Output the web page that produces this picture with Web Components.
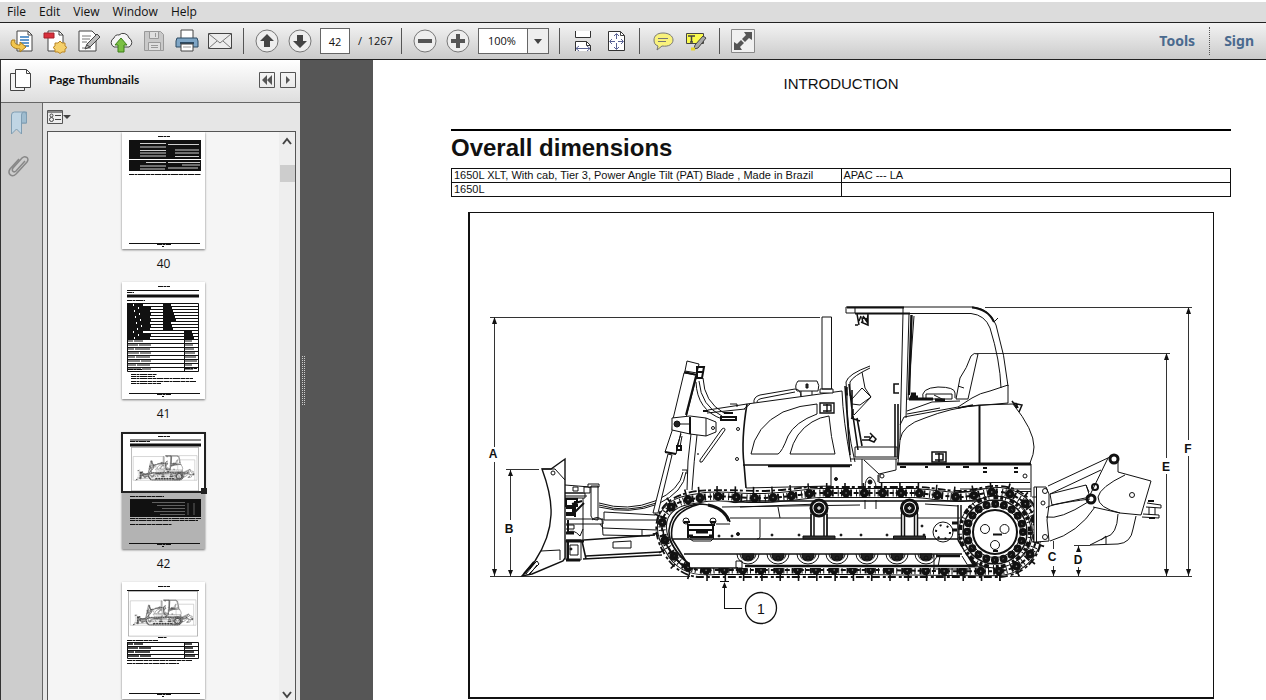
<!DOCTYPE html>
<html lang="en">
<head>
<meta charset="utf-8">
<title>Service manual - page 42</title>
<style>
html,body{margin:0;height:100%;overflow:hidden}
body{font:12px/16px "Open Sans","Noto Sans",sans-serif;color:#111;background:#fff}
</style>
</head>
<body>
<viewer-app></viewer-app>
<script>
const define = (name, html, setup) => {
  const tpl = document.createElement('template');
  tpl.innerHTML = html;
  customElements.define(name, class extends HTMLElement {
    constructor() {
      super();
      this.attachShadow({ mode: 'open' }).append(tpl.content.cloneNode(true));
    }
    connectedCallback() { if (setup) setup(this, this.shadowRoot); }
  });
};

/* Side view of the dozer, in the coordinate space 470..1212 x 213..696 */
const TRACK = 'M700 498C720 494 740 499 765 498C790 497 800 494 820 493H915C930 494 940 496 960 497C975 497 985 491 1000 492C1022 494 1037 512 1037 532C1037 552 1022 569 1000 571C960 572 900 570 860 570H715C692 572 678 566 670 550C662 538 660 526 664 516C670 504 682 500 700 498Z';
const FEET = 'M698 491C720 489 740 491 765 491C790 490 800 487 820 487H915C930 487 940 490 960 491C975 491 985 485 1000 486C1025 487 1042 508 1042 532C1042 556 1026 575 1000 577H700C686 577 672 568 664 553C656 540 654 526 659 514C665 500 680 493 698 491Z';
const rollers = [748, 778, 808, 837, 867, 897, 926].map(x =>
  `<path d="M${x - 11} 554A11 10 0 0 0 ${x + 11} 554"/><path d="M${x - 8} 554A8 7 0 0 0 ${x + 8} 554"/><path d="M${x - 6} 554h12v3l-3 3h-6l-3-3z" fill="#222"/><circle cx="${x}" cy="558" r="2"/>`).join('');
const carrier = x =>
  `<path fill="#fff" d="M${x - 8} 511h16v26h-16z"/><path stroke-width="1.500" d="M${x - 5} 514v22M${x + 5} 514v22M${x - 8} 514v22M${x + 8} 514v22"/><path fill="#333" d="M${x - 16} 536h32v3h-32z"/><circle cx="${x}" cy="508" r="8" fill="#fff" stroke-width="3"/><circle cx="${x}" cy="508" r="3.500" stroke-width="4"/><path stroke="#bbb" stroke-width="1" d="M${x - 2} 508h4M${x} 506v4"/>`;
const DOZER = `
<g fill="none" stroke="#111" stroke-width="1">
  <g id="blade">
    <path stroke-width="1.4" d="M542 469Q552 496 551 515Q550 538 535 561L522 576L532 574L563 561L565 558V459L551 469Z"/>
    <path d="M542 469H555L565 480M541 551L560 550V560M522 576L537 561L539 564L528 575M526 574L535 563M530 574L537 565"/>
    <circle cx="553" cy="473" r="2"/>
    <path stroke-width="2" d="M534 562L524 574"/>
    <path d="M565 485L590 487V493H565M573 487h5v4h-5zM565 496h22M584 492v-5h7M565 493h20v5h-20"/>
    <path fill="#fff" d="M591 486V516Q592 520 598 520V486zM588 484h11v3h-11z"/>
    <path stroke-width="2" d="M566 499h11v7h-11zM566 508h7v5h-7M572 504l10-3M575 512l9-9M566 515h10M575 501v16"/>
    <path d="M566 519H603V524H566M583 498V540M567 533Q573 528 580 536L583 529M566 525h8v4h-8M592 520Q597 515 602 520"/>
    <path d="M604 512L655 515M604 520H657M603 528L657 530M604 512V520M602 519L603 535L650 536M642 530V536M600 524L603 528"/>
    <path stroke-width="1.6" d="M584 540L655 535M583 559L662 555M586 556L660 552M582 541L586 559"/>
    <path d="M613 542L631 541V548H613zM566 540h15v20h-15zM570 545h8v10h-8z"/>
    <path stroke-width="3" d="M566 541H584M566 560H580M566 533h8"/>
    <path stroke-width="2" d="M568 520v14M568 540v20"/>
    <circle cx="571" cy="549" r="1" fill="#111"/>
    <path d="M599 503Q628 512 655 501Q680 490 683 472M599 507Q630 515 658 504Q684 492 686 472M599 505Q628 514 656 503"/>
  </g>
  <g id="cylinder">
    <path fill="#fff" d="M668 454L653 513L658 513L672 455z"/>
    <path d="M687 490Q687 460 691 434M692 490Q694 460 697 435M682 470h5v4"/>
    <path fill="#fff" d="M687 361L699 364L697 373L685 371ZM684 373L673 419L672 431L665 452L676 454L681 432L686 418L697 375Z"/>
    <path stroke-width="2" d="M684 372L697 375M665 452L676 454M696 376L686 415"/>
    <path fill="#fff" d="M672 418L690 416L706 418L716 422V432L706 436L690 434L672 430Z"/>
    <path stroke-width="2" d="M690 417V434"/>
    <path d="M706 418V436M679 424H690"/>
    <circle cx="677" cy="424" r="3" fill="#222"/><circle cx="713" cy="428" r="1.5"/>
    <path stroke-width="2" d="M697 367L704 367L702 378L697 378ZM698 372h6"/>
    <path d="M681 434l-4 12M682 436l-2 11"/><path stroke-width="2" d="M677 446h4v4h-4z"/>
    <path d="M696 382Q697 410 722 419M699 381Q701 406 722 416M703 378Q704 402 724 413"/>
    <path stroke-width="2" d="M721 417h15v3h-15zM724 413h9M703 411h5"/>
    <path d="M700 460L722 429Q725 427 725 430L702 462Q699 463 700 460"/>
    <circle cx="738" cy="429" r="1.5"/><circle cx="737" cy="459" r="1.5"/><circle cx="698" cy="454" r=".5"/>
  </g>
  <g id="hood">
    <path d="M708 410L747 404M707 413L745 409M744 409L750 404M730 404h7v3"/>
    <path stroke-width="1.6" d="M747 404Q741 440 744 464L746 488"/>
    <path stroke-width="1.6" d="M743 465H852M768 466.5H850"/>
    <path d="M747 404L842 391M842 391Q843 420 851 462M847 393Q846 425 855 462"/>
    <path d="M754 403Q753 397 760 395L795 389Q801 389 801 397M757 402Q757 399 764 398L795 392"/>
    <path d="M798 381H817Q820 385 818 391H797Q794 386 798 381M801 391V396M812 391V395"/><path fill="#333" d="M806 384h2v4h-2z"/>
    <path fill="#fff" d="M822 317H831.500V389H822zM820 389h13v4h-13z"/>
    <path d="M751 454Q755 426 783 412Q800 405 817 404V414Q795 422 788 436Q782 452 778 454ZM790 454Q795 432 812 422Q820 417 829 416Q831 438 835 454Z"/>
    <path stroke-width="1.4" d="M820 403h14v10h-14zM823 405h8v6h-8M827 404v8"/>
    <path d="M831 466V488M862 459V488M746 488L831 486"/><circle cx="836" cy="479" r="1.500" fill="#111"/>
  </g>
  <g id="cab">
    <path d="M846 307h9v6h-9zM855 307H973Q990 309 996 325Q1005 355 1008 386M855 313.500H971Q985 315 990 328Q1000 360 1001 388M903 307V313"/>
    <path stroke-width="2" d="M972 307.500Q988 309 994 322M847 307.500H904M855 313.500H910"/>
    <path d="M994 322l4-4"/>
    <path stroke-width="1.500" d="M857 314l2 11M861 316l-2 5M863 316l4 6l1-8M863 323l-1-5l6 1M855 325h3M861 322l7 3V315"/>
    <path d="M903 313L900 440M909 314L906 418M914 316L908 400"/>
    <path stroke-width="2.400" d="M911.500 315L909 395"/>
    <path stroke-width="1.600" d="M899 384h-5v9h5M895 404v53M898 404v55"/>
    <path d="M847 396L846 382Q848 374 870 366M850 396V382Q853 376 870 368M862 372L865 388L871 397L854 415M852 399L862 388L871 397L860 405L852 404"/>
    <path stroke-width="1.600" d="M845 386L850 455M849 384L853 418M852 390v28M853 416L858 450M857 418L862 446M851 418l9 3"/>
    <path stroke-width="1.500" d="M862 440h7l5 2l2-3l-6-6M869 440l4-5M847 387v8M853 409v6M864 437h6"/>
    <path d="M855 447H897V457H855zM850 459H897"/>
    <path fill="#fff" d="M971 356Q974 352 978 354L968 399H956L960 378Q967 368 971 356ZM958 386L964 388"/>
    <path d="M923 399Q920 388 938 387Q955 387 955 393V398M926 394h26v5h-26zM934 395l10 5"/>
    <path stroke-width="3" d="M910 397h8M911 394h5M909 399h24M935 400h10"/>
    <path d="M907 411L932 402L960 401M904 417L958 407L972 398Q980 393 990 391L1008 385V403L962 407M907 414L940 408"/>
    <path d="M898 463L900 440Q902 425 925 418Q950 408 979 405L1013 404Q1034 430 1034 447Q1034 454 1030 463"/>
    <path d="M904 417L900 425"/><path stroke-width="2" d="M979.500 405V463"/>
    <path stroke-width="1.500" d="M932 452h14v10h-14zM935 454h8v6h-8M939 453v9M1013 403l9 2l-3 7M1016 403l2 5M1012 401l5 7M958 408l15-3"/>
    <path stroke-width="3" d="M897 464H1031"/>
    <path d="M864 460L879 474V482.500H1030M879 474L896 470V459M878 475V482M1031 464V497M960 489H1031M960 491.500H1031M865 488Q865 478 870 477Q876 480 876 488"/>
    <path stroke-width="2" d="M900 467h6M925 467h3M946 467h4M963 467h6M983 468h4M983 472h4M1014 468h4M1014 472h4"/>
    <circle cx="882" cy="476" r="2"/><circle cx="1025" cy="476" r="2"/><circle cx="870" cy="482" r="2" fill="#111"/>
  </g>
  <g id="track">
    <path d="${FEET}" stroke-width="8" stroke-dasharray="1.600 16.700"/>
    <path d="${FEET}" stroke-width="1.800" stroke-dasharray="8 2 3 3"/>
    <path d="${TRACK}" stroke-width="10"/>
    <path d="${TRACK}" stroke="#fff" stroke-width="8"/>
    <path d="${TRACK}" stroke-width="7" stroke-dasharray="1 3 2 4 1 2.300 1 4"/>
    <path d="${TRACK}" stroke-width="2" stroke-dasharray="5 3 4 2"/>
    <path d="${TRACK}" stroke-width="9" stroke-linecap="round" stroke-dasharray="0 18.300"/>
    <path d="${TRACK}" stroke="#999" stroke-width="1.500" stroke-linecap="round" stroke-dasharray="0 18.300"/>
    <path stroke-width="1.600" d="M1000 501H745Q720 505 700 504Q672 506 669 530Q668 546 690 565H978M663 530Q664 552 690 572"/>
    <path fill="#fff" d="M690 539L690 554V568H970L962 554V507H740V504Q700 496 680 515Q671 525 672 539Z" stroke="none"/>
    <path stroke-width="1.600" d="M672 539Q668 512 700 504Q724 505 730 522M672 539H958M684 554H962M672 539L690 568H738"/>
    <path d="M730 518H960"/>
    <path stroke-width="3" d="M708 505Q724 508 729 521"/>
    <path d="M716 524H730M722 507L860 505M778 507L780 518M740 507L818 504M865 500v9M876 500v9M925 504L958 506M760 519v18q0 2-3 2"/>
    <path d="M736 561h6v7h-6z"/>
    <path stroke-width="2" d="M688 524V538M713 524V538M687 525h28M688 530h25M690 537h22M684 522h6M710 522h6"/>
    <path d="M690 539l3 2h18l3-3"/><circle cx="686" cy="521" r="3"/><circle cx="713" cy="521" r="3"/>
    <path stroke-width="3" d="M696 532h12M689 536h4M709 536h4"/>
    <g fill="#111"><circle cx="738" cy="534" r="1.500"/><circle cx="719" cy="536" r="1"/><circle cx="732" cy="536" r="1"/><circle cx="772" cy="535" r="1"/><circle cx="799" cy="535" r="1"/><circle cx="841" cy="535" r="1"/><circle cx="861" cy="535" r="1"/><circle cx="887" cy="535" r="1"/><circle cx="922" cy="526" r="1"/><circle cx="924" cy="535" r="1"/></g>
    ${rollers}
    ${carrier(819)}${carrier(909.5)}
    <path stroke-width="2.500" d="M745 566H975M936 556h24"/>
    <path d="M934 555V569H970L962 556M940 556l-2 11"/>
    <circle cx="943" cy="532" r="10"/><circle cx="943" cy="532" r="7" stroke-width="2" stroke-dasharray="2 5.330"/>
    <path d="M958 505V540M961 505V540M969 512v-5h8M958 540L974 566" stroke-width="1.500"/><path stroke-width="3" d="M963 545L976 566M952 523h6M952 530h5"/>
    <circle cx="995" cy="532" r="36" fill="#fff"/>
    <circle cx="995" cy="532" r="35" stroke-width="4" stroke-dasharray="3 2 1 4 5 2"/>
    <circle cx="995" cy="532" r="28" stroke-width="8" stroke-linecap="round" stroke-dasharray="0 8.796"/>
    <circle cx="995" cy="532" r="28" stroke="#999" stroke-width="1" stroke-dasharray="1 7.796"/>
    <circle cx="995" cy="532" r="32" stroke-width="1.500"/><circle cx="995" cy="532" r="25.500"/><circle cx="995" cy="532" r="22" stroke-width="2" fill="#fff"/>
    <circle cx="985" cy="529" r="4.500"/><circle cx="1004.500" cy="529" r="4.500"/><circle cx="995" cy="545" r="4.500"/>
    <path stroke-width="2" d="M993 534.500h9M993 551h5"/>
  </g>
  <g id="ripper">
    <path fill="#fff" d="M1034 487H1046L1049 494V505L1047 520L1049 541L1036 542H1034z"/><path d="M1036.500 487V542M1032 497h5"/>
    <circle cx="1045" cy="491" r="2.500"/><circle cx="1043" cy="503" r="2"/><circle cx="1045" cy="537" r="2.500"/>
    <path d="M1048 486L1110 457M1050 494L1101 470M1108 458L1090 495M1118 462L1118 472L1151 481L1141 515L1120 513Q1098 508 1098 497Q1100 487 1125 475M1093 507L1120 513"/>
    <path d="M1050 494L1086 485L1090 497L1052 505M1050 494L1052 505M1046 508Q1050 504 1090 499M1046 517Q1060 520 1088 502M1050 541Q1078 533 1095 507M1086 485l3 7"/>
    <circle cx="1114" cy="459" r="4" stroke-width="3"/><circle cx="1095" cy="487" r="3" stroke-width="2"/><circle cx="1091" cy="499" r="4" stroke-width="3"/>
    <circle cx="1132" cy="495" r="2.500"/>
    <path d="M1118 514Q1117 535 1106 537L1090 545L1118 544Q1131 543 1133 529L1136 516M1101 540l5-4v8"/>
    <path d="M1147 503L1161 505V508L1146 507M1143 514L1159 515V518L1142 517M1149 507V515M1155 508V515"/>
    <path stroke-width="2" d="M1148 501h6M1149 518h6"/>
  </g>
</g>`;
const DIMENSIONS = `
<g fill="none" stroke="#333" stroke-width="1" shape-rendering="crispEdges">
  <path d="M490 317.500H820M494.500 318V447M494.500 462V576M506 469.500H539M510.500 470V520M510.500 537V576M490 576.500H690M1010 576.500H1192M985 307.500H1192M1188.500 308V440M1188.500 456V576M976 353.500H1170M1166.500 354V458M1166.500 474V576M1053.500 541V549M1053.500 566V576M1074 545.500H1090M1078.500 546V552M1078.500 567V576"/>
  <path stroke="#111" d="M724.500 584V608.500H742M720 581.500h9"/>
</g>
<path fill="#111" d="M492 324l2.500-7l2.500 7zM492 569l2.500 7l2.500-7zM508 476l2.500-6l2.500 6zM508 570l2.500 6l2.500-6zM1186 314l2.500-7l2.500 7zM1186 569l2.500 7l2.500-7zM1164 360l2.500-7l2.500 7zM1164 569l2.500 7l2.500-7zM1051 570l2.500 6l2.500-6zM1076 552l2.500-6l2.500 6zM1076 570l2.500 6l2.500-6zM722 588l2.500-6l2.500 6z"/>
<circle cx="761" cy="608" r="15.500" fill="none" stroke="#111" stroke-width="1.300"/>`;

/* Page shell */
define('viewer-app', `
<style>
:host{display:flex;flex-direction:column;height:100vh;padding-top:2px;box-sizing:border-box}
main{flex:1;min-height:0;display:flex;background:#565656}
</style>
<menu-bar></menu-bar>
<tool-bar></tool-bar>
<main>
  <thumbs-panel></thumbs-panel>
  <pane-splitter></pane-splitter>
  <manual-page></manual-page>
</main>`);

define('menu-bar', `
<style>
:host{display:block;background:#dcdcdc;height:20px}
nav{display:flex;gap:13px;padding-left:7px}
button{all:unset;font:12px/20px "Open Sans","Noto Sans",sans-serif;color:#111}
</style>
<nav aria-label="Menu"><button>File</button><button>Edit</button><button>View</button><button>Window</button><button>Help</button></nav>`);

define('tool-button', `
<style>
:host{display:block;width:33px}
button{all:unset;display:grid;place-items:center;width:100%;height:100%}
</style>
<button><slot></slot></button>`, (el, root) => root.querySelector('button').setAttribute('aria-label', el.getAttribute('label')));

define('tool-bar', `
<style>
:host{display:flex;align-items:center;height:36px;padding:0 12px 0 5px;background:linear-gradient(#f3f3f3,#cbcbcb);border-top:1px solid #222;border-bottom:1px solid #222;font-size:11px}
tool-button{height:36px}
hr{width:1px;height:26px;margin:0 6px 0 7px;border:0;background:#555}
svg{display:block;width:26px;height:26px;fill:none;stroke:#444}
input{box-sizing:border-box;width:30px;height:26px;margin:0 8px 0 4px;padding:0;border:1px solid #666;background:#fff;font:inherit;text-align:center;color:#111}
label{white-space:pre;min-width:36px}
.zoom{display:grid;grid-template-columns:48px 21px;height:24px;margin:0 3px 0 4px;border:1px solid #666;background:#fff}
select{grid-area:1/1/2/3;appearance:none;border:0;background:none;padding:0 0 0 9px;font:inherit;color:#111;margin:0}
.zoom svg{grid-area:1/2;width:20px;height:24px;border-left:1px solid #666;pointer-events:none;background:#efefef}
a{font:bold 14px/20px "Noto Sans","Open Sans",sans-serif;color:#4a6a8e;text-decoration:none}
a.first{margin-left:auto;padding-right:14px}
a.last{padding:4px 0 4px 14px;border-left:1px dotted #555}
</style>
<tool-button label="Open"><svg viewBox="0 0 26 26"><path fill="#fff" d="M8 3h11l4 4v16H8z"/><path d="M19 3v4h4"/><path stroke="#2e78bd" stroke-width="1.500" d="M11 9h9M11 12h9M11 15h9M13 18h7"/><path fill="#f2c64e" stroke="#a97b1a" d="M3 12c-3 5 1 9 8 9v3l6-5l-6-5v3c-4 0-6-2-5-5z"/></svg></tool-button>
<tool-button label="Create PDF"><svg viewBox="0 0 26 26"><path fill="#fff" d="M6 3h11l4 4v16H6z"/><path d="M17 3v4h4"/><path fill="#d8303c" stroke="#a3202a" d="M2 5h10v5H2z"/><path fill="#f5d06a" stroke="#b98524" d="M18 13l2 2h3v3l2 1.500l-2 1.500v3h-3l-2 1.500l-2-1.500h-3v-3l-2-1.500l2-1.500v-3h3z"/></svg></tool-button>
<tool-button label="Edit"><svg viewBox="0 0 26 26"><path fill="#fff" d="M4 3h13l4 4v16H4z"/><path stroke="#777" d="M7 8h9M7 11h8M7 14h5M7 20h9"/><path fill="#bbb" d="M22 6l3 3l-10 10l-5 2l2-5z"/><path d="M12 17l3 2"/></svg></tool-button>
<tool-button label="Share"><svg viewBox="0 0 26 26"><path fill="#f5f5f5" d="M6 19a5 5 0 0 1 0-9a4 4 0 0 1 5-3a6 6 0 0 1 10 3a5 5 0 0 1 0 9z"/><path fill="#7bc043" stroke="#3c7f1b" d="M13 10l6 7h-3v7h-6v-7H7z"/></svg></tool-button>
<tool-button label="Save"><svg viewBox="0 0 26 26"><path fill="#c9c9c9" stroke="#999" d="M3.500 3.500h16l3 3v16h-19z"/><path fill="#e0e0e0" stroke="#999" d="M8.500 3.500h9v7h-9zM7.500 14.500h12v8h-12z"/><path stroke="#999" d="M10 17.500h7M10 19.500h7M14.500 5v4"/></svg></tool-button>
<tool-button label="Print"><svg viewBox="0 0 26 26"><path fill="#fff" d="M7 2h12v9H7z"/><path fill="#7fa6c6" stroke="#2d4a63" d="M3 10h20l1 3v6H2v-6z"/><path stroke="#2d4a63" stroke-width="2" d="M6 15h14"/><path fill="#fff" d="M7 16h12v7H7z"/><path stroke="#999" d="M9 19h8"/></svg></tool-button>
<tool-button label="Email"><svg viewBox="0 0 26 26"><path fill="#ececec" d="M1.500 5.500h23v15h-23z"/><path stroke="#777" d="M2 6l11 9L24 6M2 20l8-7M24 20l-8-7"/></svg></tool-button>
<hr>
<tool-button label="Previous page"><svg viewBox="0 0 26 26"><circle cx="13" cy="13" r="11" fill="#eee" stroke="#777"/><path fill="#444" stroke="none" d="M13 6l7 7h-4v6h-6v-6H6z"/></svg></tool-button>
<tool-button label="Next page"><svg viewBox="0 0 26 26"><circle cx="13" cy="13" r="11" fill="#eee" stroke="#777"/><path fill="#444" stroke="none" d="M13 20l7-7h-4V7h-6v6H6z"/></svg></tool-button>
<input id="page" value="42" aria-label="Page number"><label for="page">/  1267</label>
<hr>
<tool-button label="Zoom out"><svg viewBox="0 0 26 26"><circle cx="13" cy="13" r="11" fill="#eee" stroke="#777"/><path fill="#555" stroke="none" d="M6 11h14v4H6z"/></svg></tool-button>
<tool-button label="Zoom in"><svg viewBox="0 0 26 26"><circle cx="13" cy="13" r="11" fill="#eee" stroke="#777"/><path fill="#555" stroke="none" d="M11 6h4v5h5v4h-5v5h-4v-5H6v-4h5z"/></svg></tool-button>
<span class="zoom"><select aria-label="Zoom"><option>100%</option></select><svg viewBox="0 0 20 24"><path fill="#444" stroke="none" d="M6 10h8l-4 5z"/></svg></span>
<hr>
<tool-button label="Fit width"><svg viewBox="0 0 26 26"><path fill="#fff" stroke="#333" d="M5.500 3v6.500h15V3M5.500 23v-9.500h11l4 4v5.500"/><path stroke="#333" d="M16.500 13.500v4h4"/><path stroke="#5a6294" d="M6 20.500h14M9 18l-3 2.500l3 2.500M17 18l3 2.500l-3 2.500"/></svg></tool-button>
<tool-button label="Fit page"><svg viewBox="0 0 26 26"><path fill="#fff" stroke="#333" d="M5.500 3.500h12l4 4v15h-16z"/><path d="M17.500 3.500v4h4"/><path stroke="#5a6294" d="M13.500 6v5M13.500 15v6M7 13.500h5M15 13.500h5M11 8l2.500-2.500L16 8M11 19l2.500 2.500L16 19M9 11l-2.500 2.500L9 16M18 11l2.500 2.500L18 16"/></svg></tool-button>
<hr>
<tool-button label="Comment"><svg viewBox="0 0 26 26"><path fill="#f9f27c" stroke="#777" d="M13 5c-6 0-9 3-9 7c0 3 1 5 4 6l-1 4l5-4c7 1 11-2 11-6s-4-7-10-7z"/><path stroke="#777" d="M8 10.500h10M8 13.500h8"/></svg></tool-button>
<tool-button label="Highlight"><svg viewBox="0 0 26 26"><path fill="#fafa4e" stroke="#444" d="M3.500 5.500h17v10h-17z"/><path stroke-width="1.500" d="M5 8h7M8.500 8v6M7 14h3"/><path fill="#aaa" d="M20 8l3 2l-8 10l-4 1l1-4z"/><path stroke="#e6d42e" stroke-width="3" d="M8 21h4"/></svg></tool-button>
<hr>
<tool-button label="Full screen"><svg viewBox="0 0 26 26"><path fill="#f0f0f0" stroke="#888" d="M1.500 1.500h23v23h-23z"/><path fill="#555" stroke="none" d="M22 4v8l-3-2l-4 4l-3-3l4-4l-2-3zM4 22v-8l3 2l4-4l3 3l-4 4l2 3z"/></svg></tool-button>
<a class="first" href="#tools">Tools</a><a class="last" href="#sign">Sign</a>`);

/* Tiny page artwork, 83 x 117 */
const line = (x, y, w, t = 1) => `<path stroke-width="${t}" d="M${x} ${y}h${w}"/>`;
const small = (x, y, w) => `<path stroke-width="1" stroke-dasharray="5 .500 3 .500 7 .500" d="M${x} ${y + .5}h${w}"/>`;
const foot = line(7, 111.5, 71) + small(35, 112, 14) + line(40, 114.5, 2) + small(36, 4, 12);
const rows = (x, y, n, step, w, split, t) => {
  let s = `<path fill="none" d="M${x}.500 ${y}.500h${w}v${n * step}h-${w}zM${x + split}.500 ${y}.500v${n * step}"/>`;
  for (let i = 0; i < n; i++) s += line(x, y + i * step + .5, w) + `<path stroke-width="${t}" stroke-dasharray="${6 + i * 5 % 9} 1 ${9 + i * 3 % 7} 60" d="M${x} ${y + i * step + 2}h${split - 3}"/><path stroke-width="${t}" d="M${x + split + 1} ${y + i * step + 2}h${Math.min(w - split - 1, 7 + i * 7 % 6)}"/>`;
  return s;
};
const mini = (x, y, w) => `<svg x="${x}" y="${y}" width="${w}" height="${w * 483 / 742}" viewBox="470 213 742 483"><path fill="#fff" stroke="#777" stroke-width="7" d="M473 216h736v477H473z"/><g opacity=".9">${DOZER.replace(/ id="\w+"/g, '').replace('stroke-width="1"', 'stroke-width="4"')}</g><path fill="none" stroke="#aaa" stroke-width="5" d="M494 317H822M494 317V576H1190V307H985M1166 353V576M975 353H1166"/></svg>`;
const ART = {
  40: foot + `<path fill="#111" stroke="none" d="M7 8h72v19H7zM7 28h72v11H7z"/><path stroke="#fff" stroke-width=".800" d="M18 11.500h26M46 12.500h31M18 15h26M18 18.500h26M53 18h24M18 21h26M53 21h24M18 24h26M53 24.500h24M24 30.500h20M46 30.500h32M18 34h26M46 36h30M18 37h25M60 33h18"/>` + small(7, 42, 72),
  41: foot + line(5, 8.5, 72) + small(5, 10, 7) + line(5, 14, 72, 3) + small(5, 18, 18) + rows(5, 21, 9, 3, 71, 36, 2) + rows(5, 48, 3, 3, 71, 57, 2) + rows(5, 57, 8, 4, 71, 57, 1) + small(6, 87, 14) + small(6, 85, 23) + small(63, 86, 12) + small(9, 92, 26) + small(9, 94, 24) + small(9, 96, 62) + small(9, 99, 65) + small(9, 101, 30),
  42: `<path fill="#b3b3b3" stroke="none" d="M0 61h83v56H0z"/>` + foot + line(8, 8, 71) + small(8, 9, 20) + line(8, 13, 71, 3) + mini(9, 15, 68) + small(8, 64, 34) + `<path fill="#111" stroke="none" d="M8 67h71v18H8z"/><path stroke="#999" stroke-width=".600" d="M30 70.500h33M35 73.500h28M40 76.500h23M32 79.500h31M38 82.500h25M66 71v12M72 71v12"/>` + small(8, 86, 71) + small(8, 88, 68) + small(8, 92, 42) + `<path fill="none" stroke="#222" stroke-width="2" d="M0 1h83v59H0z"/><path fill="#222" stroke="none" d="M79 56h6v6h-6z"/>`,
  43: foot + line(5, 8.5, 72, 1) + mini(6, 9, 70) + small(36, 55, 9) + small(5, 58, 31) + rows(5, 60, 4, 4, 71, 57, 1.5) + small(5, 78, 65) + small(5, 81, 52)
};
define('page-thumb', `
<style>
:host{display:flex;flex-direction:column;align-items:center}
.page{display:block;width:83px;height:117px;background:#fff;box-shadow:0 1px 2px #777;stroke:#111;overflow:visible}
span{line-height:16px;padding:7px 0 10px}
</style>
<svg class="page" viewBox="0 0 83 117" aria-hidden="true"></svg><span><slot></slot></span>`,
  (el, root) => { root.querySelector('svg').innerHTML = ART[el.textContent.trim() || 43]; });

define('thumbs-panel', `
<style>
:host{display:flex;flex-direction:column;flex:0 0 299px;border-left:1px solid #333;background:#e6e6e6}
header{display:flex;align-items:center;height:43px;box-sizing:border-box;border-bottom:1px solid #666;background:linear-gradient(#fff,#dedede);padding:0 4px 2px 7px}
h2{font:bold 12px/16px "Lato","Open Sans",sans-serif;margin:0 auto 0 17px}
button{all:unset;display:block}
svg{display:block;fill:none;stroke:#444}
header .sq{margin-left:5px}
.body{flex:1;min-height:0;display:flex}
.rail{width:41px;background:#cdcdcd;border-right:1px solid #666;display:flex;flex-direction:column;align-items:center;gap:17px;padding-top:7px;box-sizing:content-box}
.rail button{margin-right:6px}
.right{flex:1;display:flex;flex-direction:column;min-width:0;padding:0 4px}
.options{height:28px;display:flex;align-items:center}
.list{flex:1;min-height:0;border:1px solid #555;border-bottom:0;display:flex;background:#f5f5f5}
.pages{flex:1;overflow:hidden;display:flex;flex-direction:column}
.bar{width:16px;background:#eee;display:flex;flex-direction:column;align-items:center}
.bar i{width:15px;height:17px;background:#cdcdcd;margin:15px 0 auto}
</style>
<header>
  <button aria-label="Page thumbnails"><svg width="24" height="26" viewBox="0 0 24 26"><path fill="#f4f4f4" d="M2.500 6.500h14v17h-14z"/><path fill="#fff" d="M7.500 2.500h11l4 4v14h-15z"/><path d="M18.500 2.500v4h4"/></svg></button>
  <h2>Page Thumbnails</h2>
  <button class="sq" aria-label="Collapse"><svg width="16" height="16" viewBox="0 0 16 16"><path d="M.5.5h15v15H.5z" stroke="#555"/><path fill="#555" stroke="none" d="M8 3v10L3 8zM13 3v10L8 8z"/></svg></button>
  <button class="sq" aria-label="Options"><svg width="16" height="16" viewBox="0 0 16 16"><path d="M.5.5h15v15H.5z" stroke="#555"/><path fill="#555" stroke="none" d="M6 4v8l4-4z"/></svg></button>
</header>
<div class="body">
  <div class="rail">
    <button aria-label="Bookmarks"><svg width="20" height="26" viewBox="0 0 20 26"><path fill="#c0d5e4" stroke="#7f9db2" d="M2.500 24V5q0-3 3-3h12v11h-5v11l-5-5z"/><path fill="#9fbccf" stroke="#7f9db2" d="M12.500 13V5q0-3 2.500-3t2.500 3v8z"/></svg></button>
    <button aria-label="Attachments"><svg width="24" height="26" viewBox="0 0 24 26"><path stroke="#888" stroke-width="1.500" d="M18 8l-9 10c-2 2-5 0-3-3L15 5c3-3 8 0 5 4L9 21c-4 4-9 0-6-5L12 6M20 9L10 20"/></svg></button>
  </div>
  <div class="right">
    <div class="options"><button aria-label="Thumbnail options"><svg width="24" height="16" viewBox="0 0 24 16"><path fill="#eee" stroke="#555" d="M.5 1.500h15v13H.5z"/><path stroke="#888" stroke-width="2" d="M1 3h14"/><circle cx="4.500" cy="6.500" r="1.500"/><circle cx="4.500" cy="10.500" r="2"/><path d="M8 6.500h6M8 10.500h6"/><path fill="#444" stroke="none" d="M16 6h8l-4 4z"/></svg></button></div>
    <div class="list">
      <div class="pages"><page-thumb>40</page-thumb><page-thumb>41</page-thumb><page-thumb>42</page-thumb><page-thumb></page-thumb></div>
      <div class="bar">
        <button aria-label="Scroll up"><svg width="16" height="18" viewBox="0 0 16 18"><path stroke-width="2" d="M4 12l4-5l4 5"/></svg></button><i></i>
        <button aria-label="Scroll down"><svg width="16" height="16" viewBox="0 0 16 16"><path stroke-width="2" d="M4 8l4 5l4-5"/></svg></button>
      </div>
    </div>
  </div>
</div>`);

define('pane-splitter', `
<style>
:host{flex:0 0 73px;display:flex;align-items:center}
i{width:4px;height:49px;margin-left:2px;background:repeating-linear-gradient(90deg,transparent 0 1px,#565656 1px 2px),repeating-linear-gradient(#ccc 0 1px,#565656 1px 2px)}
</style><i></i>`);

define('manual-page', `
<style>
:host{display:block;flex:1;min-width:0;overflow:hidden;background:#fff;font-family:"Liberation Sans",Arial,sans-serif;color:#111}
article{padding:14px 35px 0 78px}
.running{text-align:center;font-size:15px;line-height:20px;margin:0 0 35px}
h1{font-size:24px;line-height:28px;margin:0 0 6px;padding-top:3px;border-top:2px solid #000}
table{width:100%;border-collapse:collapse;table-layout:fixed;font-size:11px;line-height:13px}
td{border:1px solid #111;padding:0 3px 0 2px;height:13px}
.figure{margin:15px 17px 0;border:2px solid #111;border-top-width:1px;border-right-width:1px}
svg{display:block;width:100%;font:bold 12px "Liberation Sans",Arial,sans-serif;fill:#111}
</style>
<article>
  <p class="running">INTRODUCTION</p>
  <h1>Overall dimensions</h1>
  <table><tr><td>1650L XLT, With cab, Tier 3, Power Angle Tilt (PAT) Blade , Made in Brazil</td><td>APAC --- LA</td></tr><tr><td>1650L</td><td></td></tr></table>
  <div class="figure"><svg viewBox="470 213 743 484" role="img" aria-label="Side view of the dozer with dimensions">
    ${DIMENSIONS}${DOZER}
    <g text-anchor="middle"><text x="493" y="458">A</text><text x="509" y="533">B</text><text x="1052" y="561">C</text><text x="1078" y="564">D</text><text x="1166" y="471">E</text><text x="1188" y="453">F</text><text x="761" y="614" font-weight="400" font-size="14">1</text></g>
  </svg></div>
</article>`);
</script>
</body>
</html>
